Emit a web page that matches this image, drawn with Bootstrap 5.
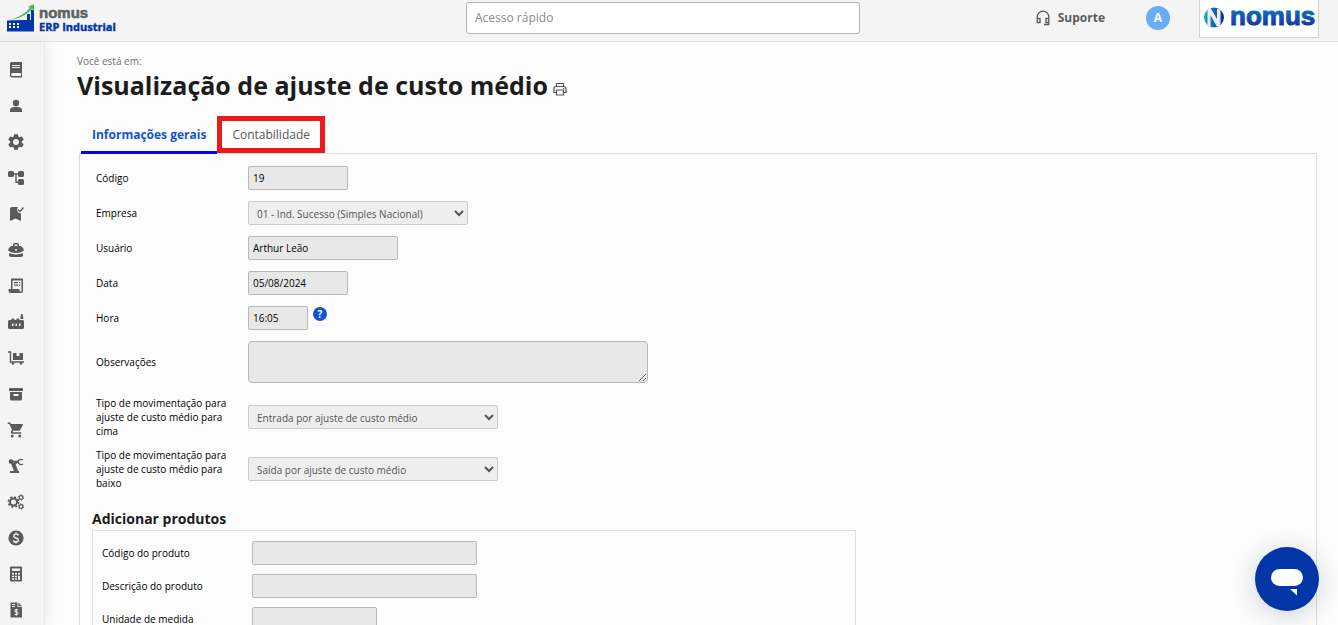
<!DOCTYPE html>
<html lang="pt-BR">
<head>
<meta charset="utf-8">
<meta name="viewport" content="width=device-width, initial-scale=1">
<title>Visualização de ajuste de custo médio</title>
<link href="https://cdn.jsdelivr.net/npm/bootstrap@5.3.0/dist/css/bootstrap.min.css" rel="stylesheet">
<style>
  body { font-family: "Open Sans", sans-serif; font-size: 10px; line-height: 14px; color: #000; background: #fcfcfc; }
  .topbar { height: 42px; background: #f4f4f4; border-bottom: 1px solid #e2e2e2; }
  .topbar > div { flex: 1 1 0; }
  .brand-logo { margin: 3px 0 0 6px; }
  .quick { width: 394px; height: 32px; margin: 2px 12px 0 0; padding: 0 8px 2px; border: 1px solid #b4b4b4; border-radius: 3px; font-size: 12px; color: #212121; }
  .quick::placeholder { color: #8a8a8a; opacity: 1; }
  .support { height: 36px; font-size: 12px; font-weight: 700; color: #5c5c5c; gap: 8px; }
  .avatar { width: 24px; height: 24px; margin: 6px 29px 0 41px; background: #68aef4; font-size: 12px; font-weight: 700; }
  .company { width: 120px; height: 38px; margin-right: 19px; background: #fff; border: 1px solid #d2d2d2; border-top: 0; }
  .sidebar { width: 45px; background: #f4f4f4; border-right: 1px solid #e8e8e8; box-shadow: 2px 0 14px rgba(0,0,0,.07); padding: 10px 0 0 7px; }
  .sidebar a { height: 36px; color: #5a5a5a; }
  .sidebar svg { width: 18px; height: 18px; fill: currentColor; }
  .page { padding: 12px 21px 0 32px; scrollbar-width: none; }
  .crumb { color: #707070; }
  .page-title { font-size: 25px; line-height: 34px; font-weight: 700; color: #1c1c1c; }
  .print { margin: 8px 0 0 5px; }
  .tabs { height: 38px; margin: 14px 0 0 4px; font-size: 12px; }
  .tabs button { border: 0; background: none; color: #5a5a5a; padding: 0 11px; }
  .tabs button.current { color: #1155cc; font-weight: 700; border-bottom: 3px solid #0000fe; border-top: 3px solid transparent; }
  .tabs button.marked { height: 37px; border: 5px solid #ea1b1d; padding: 0 10px; }
  .panel { margin: -1px 0 0 2px; border: 1px solid #dedede; padding: 12px 12px 0; }
  .fields { gap: 10px; }
  .fields > div { padding-bottom: 1px; }
  .fields > .notes { padding-bottom: 3px; }
  .fields > .tall { padding-bottom: 0; }
  .fields label { width: 136px; margin-right: 16px; }
  .panel > .fields { padding-left: 4px; }
  .box { border: 1px solid #dedede; padding: 10px 9px; width: 764px; max-width: 100%; }
  .box .fields { gap: 8px; }
  .box .fields label { margin-right: 14px; }
  .ctl { height: 24px; border: 1px solid #b8b8b8; border-radius: 2px; background: #e8e8e8; color: #000; padding: 0 4px; }
  textarea.ctl { height: 42px; width: 400px; border-radius: 4px; }
  select.ctl { background: #eee; border-color: #cbcbcb; color: #555; opacity: 1; padding: 2px 0 0 4px; }
  .w60 { width: 60px; } .w100 { width: 100px; } .w125 { width: 125px; } .w150 { width: 150px; }
  .w220 { width: 220px; } .w225 { width: 225px; } .w250 { width: 250px; }
  .tip { width: 14px; height: 14px; margin: -8px 0 0 5px; background: #1155cc; font-size: 10px; font-weight: 700; }
  .section-title { font-size: 14px; line-height: 20px; font-weight: 700; color: #1c1c1c; margin: 19px 0 1px; }
  .chat { right: 19px; bottom: 14px; width: 64px; height: 64px; background: #0236a7; box-shadow: 0 4px 26px rgba(0,40,60,.2); }
</style>
</head>
<body class="vh-100 d-flex flex-column overflow-hidden">
<header class="topbar d-flex flex-shrink-0">
  <div>
    <a href="#" class="brand-logo d-inline-block" aria-label="Nomus ERP Industrial">
      <svg width="118" height="34" viewBox="0 0 118 34">
        <path fill="#0236a7" d="M1 17.500l14-.5h6v-6h3v6h1V7h3v21.500H1z"/>
        <path fill="#f4f4f4" d="M3 20h2v2H3zm4 0h2v2H7zm4 0h2v2h-2zm-8 3h2v2H3zm4 0h2v2H7zm4 0h2v2h-2z"/>
        <path fill="#4fb574" d="M4 16.500C13 14.500 20 10 24 4.500L21.500 4 28 1v7l-2-2C21 12 13 16 4 16.500z"/>
        <text x="33" y="15" font-family="Liberation Sans, sans-serif" font-weight="700" font-size="15" fill="#626262" stroke="#626262" stroke-width=".6">nomus</text>
        <text x="33" y="28" font-family="Open Sans, sans-serif" font-weight="700" font-size="11" fill="#0236a7" stroke="#0236a7" stroke-width=".4">ERP Industrial</text>
      </svg>
    </a>
  </div>
  <input class="quick flex-shrink-0" type="text" placeholder="Acesso rápido" aria-label="Acesso rápido">
  <div class="d-flex justify-content-end">
    <a href="#" class="support d-flex align-items-center text-decoration-none">
      <svg width="14" height="16" viewBox="0 0 14 16" fill="none" stroke="#5c5c5c" stroke-width="1.300"><path d="M1.200 12V7a5.800 5.800 0 0 1 11.600 0v7.500H8M1.200 8.500H4v4H1.200zM12.800 8.500H10v4h2.800"/></svg>
      Suporte
    </a>
    <a href="#" class="avatar rounded-circle text-white text-decoration-none d-flex align-items-center justify-content-center">A</a>
    <a href="#" class="company d-block" aria-label="nomus">
      <svg width="118" height="36" viewBox="0 0 118 36">
        <defs>
          <linearGradient id="g" x1="0" y1="0" x2="0" y2="1"><stop offset=".2" stop-color="#087cc0"/><stop offset="1" stop-color="#1a249c"/></linearGradient>
          <linearGradient id="h" x1="0" y1="0" x2="1" y2="0"><stop stop-color="#16a5d8"/><stop offset="1" stop-color="#162a8e"/></linearGradient>
        </defs>
        <circle cx="14" cy="17.500" r="10" fill="url(#h)"/>
        <path d="M7.500 25V10q0-3 3-2l6.500 11V8.500l3.500 1.500v14q-1 4-4 2l-6-11v12z" fill="#e9edf2"/>
        <text x="30" y="25" font-family="Liberation Sans, sans-serif" font-weight="700" font-size="26" fill="url(#g)" stroke="url(#g)">nomus</text>
      </svg>
    </a>
  </div>
</header>
<div class="d-flex flex-grow-1" style="min-height:0">
  <nav class="sidebar flex-shrink-0 overflow-hidden" aria-label="Módulos">
    <a href="#" class="d-flex align-items-center" aria-label="Cadastros"><svg viewBox="0 0 18 18"><path fill-rule="evenodd" d="M4.500 1H15v11H5.500a1.200 1.200 0 0 0 0 3H14v-3h1v4.500H5A2 2 0 0 1 3 14.500v-12A1.500 1.500 0 0 1 4.500 1zM5 4v1h8V4zm0 2v1h8V6z"/></svg></a>
    <a href="#" class="d-flex align-items-center" aria-label="Usuários"><svg viewBox="0 0 18 18"><circle cx="9" cy="6" r="3.200"/><path d="M3 15v-2c0-2 3-3.200 6-3.200s6 1.200 6 3.200v2z"/></svg></a>
    <a href="#" class="d-flex align-items-center" aria-label="Configurações"><svg viewBox="1 1 22 22"><path d="M19.140 12.940c.04-.3.060-.61.060-.94s-.02-.64-.07-.94l2.030-1.580a.49.490 0 0 0 .12-.61l-1.920-3.320a.49.490 0 0 0-.59-.22l-2.390.96a7 7 0 0 0-1.620-.94l-.36-2.540a.48.480 0 0 0-.48-.41h-3.840a.48.480 0 0 0-.47.410l-.36 2.540c-.59.240-1.130.570-1.620.940l-2.390-.96a.49.490 0 0 0-.59.220L2.740 8.870a.48.480 0 0 0 .12.610l2.030 1.580a7 7 0 0 0 0 1.880l-2.030 1.580a.49.490 0 0 0-.12.610l1.920 3.320c.12.220.37.290.59.220l2.390-.96c.5.380 1.030.700 1.620.940l.36 2.540c.05.240.24.410.48.410h3.840c.24 0 .44-.17.470-.41l.36-2.540a7 7 0 0 0 1.620-.94l2.390.96c.22.080.47 0 .59-.22l1.920-3.320a.48.480 0 0 0-.12-.61zM12 15.600A3.600 3.600 0 1 1 12 8.400a3.600 3.600 0 0 1 0 7.200z"/></svg></a>
    <a href="#" class="d-flex align-items-center" aria-label="Processos"><svg viewBox="0 0 18 18"><rect x="1" y="2" width="6" height="6" rx="1.500"/><rect x="11" y="2" width="6" height="6" rx="1.500"/><rect x="11" y="10" width="6" height="6" rx="1.500"/><path d="M7 5h4M9 5v8.200h2" fill="none" stroke="currentColor" stroke-width="1.400"/></svg></a>
    <a href="#" class="d-flex align-items-center" aria-label="Qualidade"><svg viewBox="0 0 18 18"><path d="M5 2h6a4 4 0 0 0 3 6.500V16l-5.500-2.500L3 16V4a2 2 0 0 1 2-2z"/><path d="M11 4.500l2 2 3.500-4" fill="none" stroke="currentColor" stroke-width="1.300"/></svg></a>
    <a href="#" class="d-flex align-items-center" aria-label="Comercial"><svg viewBox="0 0 18 18"><path fill-rule="evenodd" d="M6 5V3.500A1.500 1.500 0 0 1 7.500 2h3A1.500 1.500 0 0 1 12 3.500V5h2q3 2 3 4.500Q14 12 9 12T1 9.500Q1 7 4 5zm1.500 0h3V3.500h-3zM8.300 8v2h1.400V8zM2 12.300q7 2.200 14 0V14q0 2-2 2H4q-2 0-2-2z"/></svg></a>
    <a href="#" class="d-flex align-items-center" aria-label="Notas fiscais"><svg viewBox="0 0 18 18"><path fill-rule="evenodd" d="M4 1l1 1 1-1 1 1 1-1 1 1 1-1 1 1 1-1 1 1 1-1 1 1 1-1v12.500a2.500 2.500 0 0 1-2.500 2.500H4a2.500 2.500 0 0 1-2.500-2.500V12H4zm1.500 2.500V12h7v2q1 1 2 0V3.500zM7 5h4v1.200H7zm0 2.500h4v1.200H7zM12 5h1.300v1.200H12zm0 2.500h1.300v1.200H12z"/></svg></a>
    <a href="#" class="d-flex align-items-center" aria-label="Produção"><svg viewBox="0 0 18 18"><path fill-rule="evenodd" d="M1 8.500Q1 7 2.500 7H4l1-1.500h1.500L8 7h1l1-1.500h1.500L13 7h2.500Q17 7 17 8.500v6q0 1.500-1.500 1.500h-13Q1 16 1 14.500zM5 10.500V13h1.500v-2.500zm3.500 0V13H10v-2.500zm3.500 0V13h1.500v-2.500zM14 1h1.500L16.500 6h-3.200z"/></svg></a>
    <a href="#" class="d-flex align-items-center" aria-label="Expedição"><svg viewBox="0 0 18 18"><path d="M1 3h2.500v10H17" fill="none" stroke="currentColor" stroke-width="1.400"/><path d="M6 4h3.500v3h3V4H16v7H6z"/><circle cx="6" cy="14.500" r="1.300"/><circle cx="14" cy="14.500" r="1.300"/></svg></a>
    <a href="#" class="d-flex align-items-center" aria-label="Estoque"><svg viewBox="0 0 18 18"><path fill-rule="evenodd" d="M3 3h12q1 0 1 1v2H2V4q0-1 1-1zM3 7h12v7q0 1.500-1.500 1.500h-9Q3 15.500 3 14zm3.500 2v2h5V9z"/></svg></a>
    <a href="#" class="d-flex align-items-center" aria-label="Compras"><svg viewBox="0 0 24 24"><path d="M7 18a2 2 0 1 0 0 4 2 2 0 0 0 0-4zM1 2v2h2l3.600 7.590-1.350 2.450C4.520 15.370 5.480 17 7 17h12v-2H7.420l.93-2H15.800c.75 0 1.410-.41 1.750-1.030l3.580-6.490A1 1 0 0 0 20.250 4H5.210L4.270 2zm16 16a2 2 0 1 0 0 4 2 2 0 0 0 0-4z"/></svg></a>
    <a href="#" class="d-flex align-items-center" aria-label="Manutenção"><svg viewBox="0 0 18 18"><path d="M3.500 4.500H11M4 5l4 9M10.500 5l-5 3" fill="none" stroke="currentColor" stroke-width="1.500"/><circle cx="4" cy="4.500" r="2.300"/><path d="M16 3a3 2.500 0 1 0 0 4" fill="none" stroke="currentColor" stroke-width="1.400"/><path d="M5 6l3-1 3 9h1v2H3v-2h4z"/></svg></a>
    <a href="#" class="d-flex align-items-center" aria-label="Engenharia"><svg viewBox="0 0 18 18"><g fill="none" stroke="currentColor"><circle cx="6.500" cy="9" r="3.500" stroke-width="2"/><circle cx="6.500" cy="9" r="5" stroke-width="1.800" stroke-dasharray="2 1.930"/><circle cx="14" cy="4.500" r="1.800" stroke-width="1.200"/><circle cx="14" cy="4.500" r="2.700" stroke-dasharray="1.400 1.400"/><circle cx="14" cy="13.500" r="1.800" stroke-width="1.200"/><circle cx="14" cy="13.500" r="2.700" stroke-dasharray="1.400 1.400"/></g></svg></a>
    <a href="#" class="d-flex align-items-center" aria-label="Financeiro"><svg viewBox="0 0 18 18"><circle cx="9" cy="9" r="7.600"/><path d="M11.500 6.500Q11 5 9 5T6.700 7q0 1.500 2.300 2t2.300 2q0 2-2.300 2t-2.500-1.700M9 3.500V5m0 8v1.500" fill="none" stroke="#f4f4f4" stroke-width="1.400"/></svg></a>
    <a href="#" class="d-flex align-items-center" aria-label="Custos"><svg viewBox="0 0 18 18"><path fill-rule="evenodd" d="M4 1.500h10q1 0 1 1v13q0 1-1 1H4q-1 0-1-1v-13q0-1 1-1zM5 3.500V6h8V3.500zM5 8v1.500h2V8zm3 0v1.500h2V8zm3 0v1.500h2V8zm-6 2.700v1.500h2v-1.500zm3 0v1.500h2v-1.500zm3 0v4h2v-4zm-6 2.600v1.500h2v-1.500zm3 0v1.500h2v-1.500z"/></svg></a>
    <a href="#" class="d-flex align-items-center" aria-label="Fiscal"><svg viewBox="0 0 18 18"><path d="M3.500 1.500h7V6H15v10.500H3.500z"/><path d="M11.300 1.500L15 5.200h-3.700z"/><path d="M5 3.500h3M5 5.500h3M11 8.800H9q-1.300 0-1.300 1T9 11h1q1.200 0 1.200 1.200T10 13.500H7.700M9.300 7.700v7" fill="none" stroke="#f4f4f4"/></svg></a>
  </nav>
  <main class="page flex-grow-1 overflow-auto">
    <div class="crumb">Você está em:</div>
    <div class="d-flex align-items-center">
      <h1 class="page-title mb-0">Visualização de ajuste de custo médio</h1>
      <a href="#" class="print d-flex" aria-label="Imprimir"><svg width="14" height="14" viewBox="0 0 14 14" fill="none" stroke="#555" stroke-width="1.200"><path d="M3.500 4.500v-3h7v3M3.500 10.500h-2.500V6.500q0-2 2-2h8q2 0 2 2v4h-2.500M3.500 8h7v5h-7zM10 6.500h1.300"/></svg></a>
    </div>
    <div class="tabs d-flex" role="tablist">
      <button type="button" role="tab" class="current" aria-selected="true">Informações gerais</button>
      <button type="button" role="tab" class="marked" aria-selected="false">Contabilidade</button>
    </div>
    <form class="panel">
      <div class="fields d-flex flex-column">
        <div class="d-flex align-items-center"><label for="codigo">Código</label><input id="codigo" class="ctl w100" value="19" readonly></div>
        <div class="d-flex align-items-center"><label for="empresa">Empresa</label><select id="empresa" class="ctl w220" disabled><option>01 - Ind. Sucesso (Simples Nacional)</option></select></div>
        <div class="d-flex align-items-center"><label for="usuario">Usuário</label><input id="usuario" class="ctl w150" value="Arthur Leão" readonly></div>
        <div class="d-flex align-items-center"><label for="data">Data</label><input id="data" class="ctl w100" value="05/08/2024" readonly></div>
        <div class="d-flex align-items-center"><label for="hora">Hora</label><input id="hora" class="ctl w60" value="16:05" readonly><span class="tip rounded-circle text-white d-flex align-items-center justify-content-center">?</span></div>
        <div class="notes d-flex align-items-center"><label for="obs">Observações</label><textarea id="obs" class="ctl" readonly></textarea></div>
        <div class="tall d-flex align-items-center"><label for="cima">Tipo de movimentação para ajuste de custo médio para cima</label><select id="cima" class="ctl w250" disabled><option>Entrada por ajuste de custo médio</option></select></div>
        <div class="tall d-flex align-items-center"><label for="baixo">Tipo de movimentação para ajuste de custo médio para baixo</label><select id="baixo" class="ctl w250" disabled><option>Saída por ajuste de custo médio</option></select></div>
      </div>
      <h2 class="section-title">Adicionar produtos</h2>
      <div class="box">
        <div class="fields d-flex flex-column">
          <div class="d-flex align-items-center"><label for="cod-produto">Código do produto</label><input id="cod-produto" class="ctl w225" readonly></div>
          <div class="d-flex align-items-center"><label for="desc-produto">Descrição do produto</label><input id="desc-produto" class="ctl w225" readonly></div>
          <div class="d-flex align-items-center"><label for="unidade">Unidade de medida</label><input id="unidade" class="ctl w125" readonly></div>
        </div>
      </div>
    </form>
  </main>
</div>
<button type="button" class="chat position-fixed rounded-circle border-0 p-0" aria-label="Abrir chat">
  <svg width="64" height="64" viewBox="0 0 64 64" fill="#fff"><rect x="16" y="22" width="32" height="17" rx="8.500"/><path d="M35 42h7v6.500z"/></svg>
</button>
<script src="https://cdn.jsdelivr.net/npm/bootstrap@5.3.0/dist/js/bootstrap.bundle.min.js"></script>
</body>
</html>
